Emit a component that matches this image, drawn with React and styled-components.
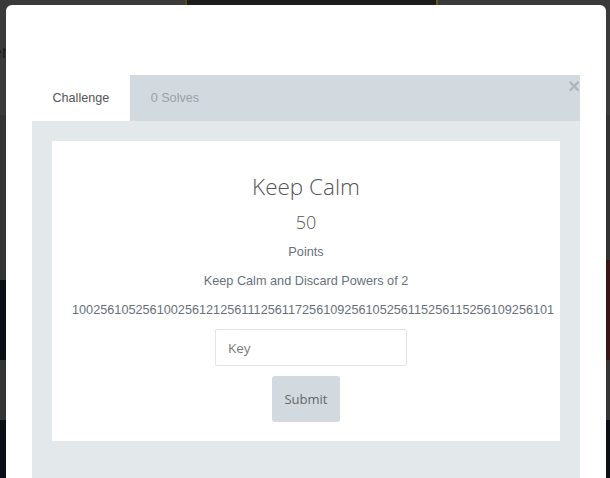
import React from 'react';
import styled, { createGlobalStyle } from 'styled-components';

const GlobalStyle = createGlobalStyle`
  html, body {
    margin: 0;
    padding: 0;
    height: 100%;
    overflow: hidden;
    background: #0b0e12;
  }
  #root {
    position: relative;
    height: 100%;
  }
`;

/* page behind the dimmed overlay */
const Backdrop = styled.div`
  display: flex;
  flex-direction: column;
  height: 100%;
`;

const Band = styled.div`
  height: ${props => props.h}px;
  background: ${props => props.bg};
  flex-shrink: 0;
`;

const TopBand = styled(Band)`
  display: flex;
  align-items: center;
  overflow: hidden;
`;

const PageTitle = styled.span`
  margin-left: -52px;
  margin-top: -12px;
  font: 19px 'Liberation Sans', Arial, sans-serif;
  color: #1e1e1e;
`;

const Stripe = styled.div`
  display: grid;
  grid-template-columns: 1fr 1fr;
  height: 100px;
  flex-shrink: 0;
`;

const StripeLeft = styled.div`
  background: linear-gradient(to bottom, #333 20px, #0b0e12 20px);
`;

const StripeRight = styled.div`
  background: #3a1518;
`;

const Logo = styled.div`
  position: absolute;
  top: 0;
  left: 185px;
  width: 253px;
  height: 5px;
  background: #1c1c1c;
  border-left: 2px solid #5a4a12;
  border-right: 2px solid #6a5512;
  box-sizing: border-box;
  z-index: 2;
`;

const Modal = styled.div`
  position: absolute;
  top: 5px;
  left: 6px;
  width: 600px;
  height: 520px;
  background: #fff;
  border-radius: 6px;
  box-sizing: border-box;
  padding: 70px 26px 0;
  z-index: 1;
`;

const Tabs = styled.div`
  position: relative;
  display: flex;
  height: 46px;
  background: #d2dae0;
`;

const Tab = styled.div`
  display: flex;
  align-items: center;
  padding: 0 ${props => (props.active ? 20.5 : 20)}px;
  margin-right: ${props => (props.active ? 1 : 0)}px;
  background: ${props => (props.active ? '#fff' : 'transparent')};
  color: ${props => (props.active ? '#555' : '#9aa1a7')};
  font: 12.6px 'Liberation Sans', Arial, sans-serif;
  cursor: pointer;
`;

const Close = styled.button`
  position: absolute;
  top: 0;
  right: 0;
  padding: 0;
  border: 0;
  background: none;
  font: bold 20px/22px 'Liberation Sans', Arial, sans-serif;
  color: #aeb5bb;
  cursor: pointer;
`;

const Pane = styled.div`
  background: #e3e8eb;
  padding: 20px;
  height: 400px;
`;

const Card = styled.div`
  background: #fff;
  padding: 33px 20px 19px;
  text-align: center;
`;

const Title = styled.h3`
  margin: 0;
  font: 300 22.5px/26px 'Open Sans', sans-serif;
  color: #555;
`;

const Value = styled.h4`
  margin: 11px 0 0;
  font: 300 18px/22px 'Open Sans', sans-serif;
  color: #555;
`;

const Line = styled.p`
  margin: ${props => props.gap}px 0 0;
  font: 12.7px/18px 'Liberation Sans', Arial, sans-serif;
  color: #68717b;
  white-space: nowrap;
`;

const Row = styled.div`
  display: flex;
  justify-content: center;
  padding-left: ${props => props.shift || 0}px;
  margin-top: 10px;
`;

const KeyInput = styled.input`
  width: 192px;
  height: 37px;
  box-sizing: border-box;
  padding: 0 12px;
  border: 1px solid #e2e4e6;
  border-radius: 2px;
  font: 13.5px 'Open Sans', sans-serif;
  color: #555;
  outline: none;
  &::placeholder {
    color: #7b7b7b;
  }
`;

const SubmitButton = styled.button`
  height: 46px;
  padding: 0 12px;
  border: 0;
  border-radius: 3px;
  background: #d2dae0;
  color: #666;
  font: 13px 'Open Sans', sans-serif;
  cursor: pointer;
`;

const cipher =
  '100256105256100256121256111256117256109256105256115256115256109256101';

const App = () => {
  return (
    <>
      <GlobalStyle />
      <Backdrop>
        <TopBand h={115} bg="#3a3a3a">
          <PageTitle>Challenge</PageTitle>
        </TopBand>
        <Band h={145} bg="#333" />
        <Stripe>
          <StripeLeft />
          <StripeRight />
        </Stripe>
        <Band h={60} bg="#343434" />
      </Backdrop>
      <Logo />
      <Modal>
        <Tabs>
          <Tab active>Challenge</Tab>
          <Tab>0 Solves</Tab>
          <Close>×</Close>
        </Tabs>
        <Pane>
          <Card>
            <Title>Keep Calm</Title>
            <Value>50</Value>
            <Line gap={10}>Points</Line>
            <Line gap={11}>Keep Calm and Discard Powers of 2</Line>
            <Line gap={11}>{cipher}</Line>
            <Row shift={10}>
              <KeyInput placeholder="Key" />
            </Row>
            <Row>
              <SubmitButton>Submit</SubmitButton>
            </Row>
          </Card>
        </Pane>
      </Modal>
    </>
  );
};

export default App;
